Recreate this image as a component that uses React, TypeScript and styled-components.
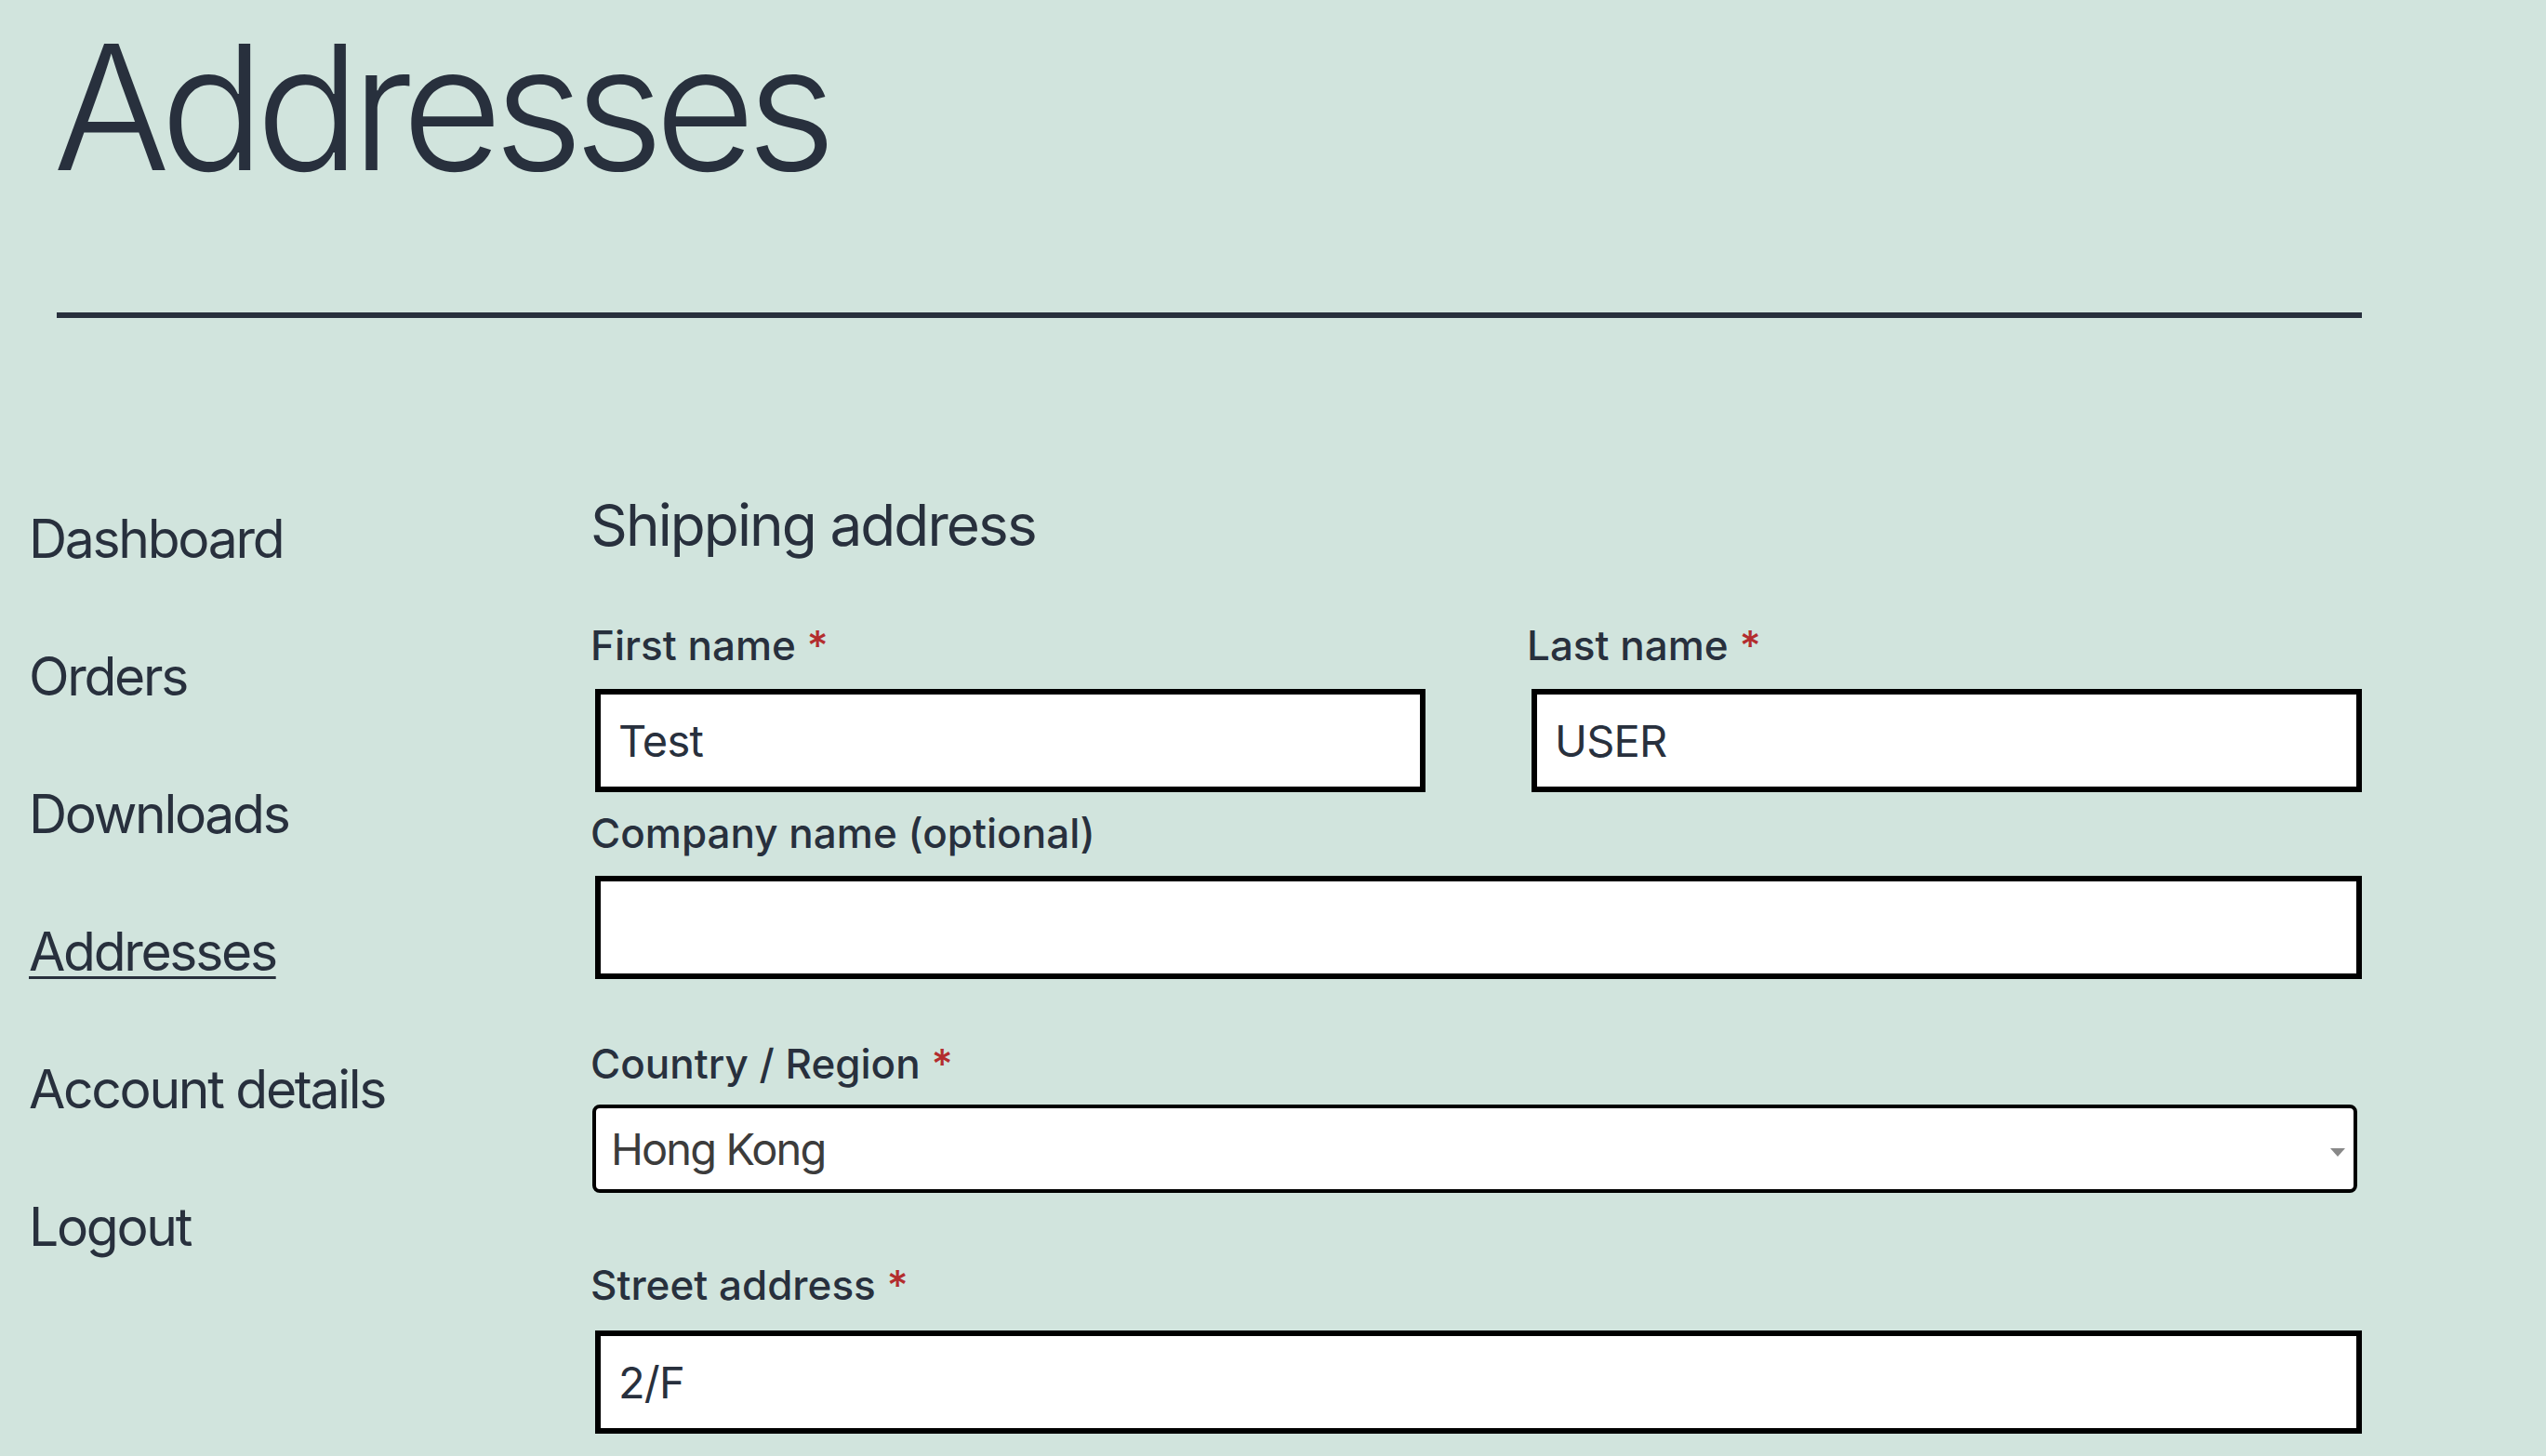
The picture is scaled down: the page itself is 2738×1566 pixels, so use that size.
import React from "react";
import styled, { createGlobalStyle } from "styled-components";

const Global = createGlobalStyle`
  html, body { margin: 0; padding: 0; background: #d1e4dd; }
  body { font-family: Inter, "Noto Sans", sans-serif; color: #28303d; }
  * { box-sizing: border-box; }
`;

const Page = styled.div`
  width: 2738px;
  min-height: 1566px;
  background: #d1e4dd;
  overflow: hidden;
`;

const Header = styled.header`
  padding: 22px 0 0 61px;
  width: 2540px;
`;

const Title = styled.h1`
  margin: 0 0 0 -4px;
  font-size: 187px;
  line-height: 187px;
  font-weight: 300;
  letter-spacing: -9.8px;
`;

const Rule = styled.hr`
  margin: 127px 0 0;
  border: 0;
  height: 6px;
  background: #28303d;
  width: 2479px;
`;

const Main = styled.div`
  display: flex;
  margin-top: 164px;
  padding-left: 31px;
`;

const Nav = styled.nav`
  width: 604px;
  flex: none;
`;

const NavList = styled.ul`
  list-style: none;
  margin: 0;
  padding: 0;
`;

const NavItem = styled.li<{ $active?: boolean }>`
  font-size: 57px;
  line-height: 148px;
  font-weight: 400;
  letter-spacing: -2.3px;
  a {
    color: #28303d;
    text-decoration: ${(p) => (p.$active ? "underline" : "none")};
    text-decoration-thickness: 3px;
    text-underline-offset: 6px;
  }
`;

const Form = styled.form`
  width: 1905px;
  padding-top: 18px;
`;

const Heading = styled.h2`
  margin: 0;
  font-size: 62px;
  line-height: 81px;
  font-weight: 400;
  letter-spacing: -1.9px;
`;

const Row = styled.div`
  display: grid;
  grid-template-columns: 898px 898px;
  column-gap: 109px;
  margin-top: 56px;
`;

const Field = styled.div<{ $top?: number }>`
  display: flex;
  flex-direction: column;
  margin-top: ${(p) => p.$top ?? 0}px;
`;

const Label = styled.label`
  font-size: 44px;
  line-height: 66px;
  font-weight: 500;
`;

const Req = styled.span`
  color: #b32d2e;
  margin-left: 12px;
`;

const TextInput = styled.input<{ $gap: number }>`
  margin: ${(p) => p.$gap}px 0 0 5px;
  width: calc(100% - 5px);
  height: 111px;
  border: 6px solid #000;
  border-radius: 0;
  background: #fff;
  padding: 0 19px;
  font-family: Inter, "Noto Sans", sans-serif;
  font-size: 47px;
  letter-spacing: -0.8px;
  color: #28303d;
  outline: none;
`;

const SelectWrap = styled.div`
  position: relative;
  margin: 11px 0 0 2px;
  width: calc(100% - 7px);
`;

const Select = styled.select`
  appearance: none;
  -webkit-appearance: none;
  width: 100%;
  height: 95px;
  border: 4px solid #000;
  border-radius: 8px;
  background: #fff;
  padding: 0 16px;
  font-family: Inter, "Noto Sans", sans-serif;
  font-size: 47px;
  letter-spacing: -1.9px;
  color: #3c3c3c;
  outline: none;
`;

const Caret = styled.svg`
  position: absolute;
  right: 13px;
  top: 47px;
  width: 16px;
  height: 9px;
  pointer-events: none;
`;

const navItems = ["Dashboard", "Orders", "Downloads", "Addresses", "Account details", "Logout"];

export default function App() {
  return (
    <Page>
      <Global />
      <Header>
        <Title>Addresses</Title>
        <Rule />
      </Header>
      <Main>
        <Nav>
          <NavList>
            {navItems.map((n) => (
              <NavItem key={n} $active={n === "Addresses"}>
                <a href="#">{n}</a>
              </NavItem>
            ))}
          </NavList>
        </Nav>
        <Form onSubmit={(e) => e.preventDefault()}>
          <Heading>Shipping address</Heading>
          <Row>
            <Field>
              <Label>
                First name<Req>*</Req>
              </Label>
              <TextInput $gap={14} defaultValue="Test" />
            </Field>
            <Field>
              <Label>
                Last name<Req>*</Req>
              </Label>
              <TextInput $gap={14} defaultValue="USER" />
            </Field>
          </Row>
          <Field $top={11}>
            <Label>Company name (optional)</Label>
            <TextInput $gap={13} defaultValue="" />
          </Field>
          <Field $top={58}>
            <Label>
              Country / Region<Req>*</Req>
            </Label>
            <SelectWrap>
              <Select defaultValue="HK">
                <option value="HK">Hong Kong</option>
              </Select>
              <Caret viewBox="0 0 16 9">
                <path d="M0 0 H16 L8 9 Z" fill="#888" />
              </Caret>
            </SelectWrap>
          </Field>
          <Field $top={66}>
            <Label>
              Street address<Req>*</Req>
            </Label>
            <TextInput $gap={16} defaultValue="2/F" />
          </Field>
        </Form>
      </Main>
    </Page>
  );
}
